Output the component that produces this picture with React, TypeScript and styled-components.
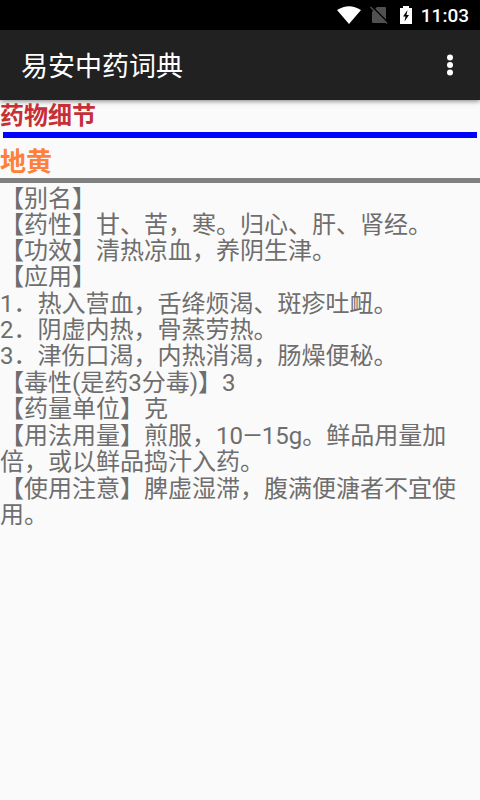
import React from "react";
import styled, { createGlobalStyle } from "styled-components";

const GlobalStyle = createGlobalStyle`
  * { box-sizing: border-box; }
  body {
    margin: 0;
    background: #fafafa;
    font-family: Roboto, "Noto Sans CJK SC", sans-serif;
    text-spacing-trim: space-all;
  }
`;

const Page = styled.div`
  display: flex;
  flex-direction: column;
  min-height: 100vh;
`;

const StatusBar = styled.div`
  display: flex;
  align-items: center;
  justify-content: flex-end;
  height: 30px;
  padding-right: 11px;
  background: #000;
  color: #fff;
`;

const StatusIcons = styled.div`
  display: flex;
  align-items: center;
  gap: 9px;
  margin-right: 6px;

  svg { display: block; }
`;

const Clock = styled.time`
  padding-top: 2px;
  font-size: 19px;
  font-weight: 500;
  line-height: 28px;
`;

const AppBar = styled.header`
  display: flex;
  align-items: center;
  justify-content: space-between;
  height: 70px;
  padding: 0 12px 0 21px;
  background: #212121;
  color: #fff;
  box-shadow: 0 1px 5px rgba(0, 0, 0, 0.5);
`;

const AppTitle = styled.h1`
  margin: 0;
  padding-top: 4px;
  font-size: 27px;
  font-weight: 400;
  line-height: 40px;
`;

const MenuButton = styled.button`
  display: flex;
  align-items: center;
  justify-content: center;
  width: 36px;
  height: 48px;
  padding: 0;
  border: 0;
  background: none;
  color: inherit;
`;

const SectionTitle = styled.h2`
  margin: 0;
  color: #c62f35;
  font-size: 24px;
  font-weight: 700;
  line-height: 32px;
`;

const BlueRule = styled.hr`
  width: calc(100% - 6px);
  height: 6px;
  margin: 0 3px;
  border: 0;
  background: #0000ff;
`;

const HerbName = styled.h3`
  margin: 0;
  padding-top: 8px;
  color: #ff7f3b;
  font-size: 26px;
  font-weight: 700;
  line-height: 32px;
`;

const GrayRule = styled.hr`
  width: 100%;
  height: 5px;
  margin: 0;
  border: 0;
  background: #808080;
`;

const Details = styled.div`
  display: flex;
  flex-direction: column;
  gap: 1px;
  padding-top: 3px;
  color: #6e6e6e;
  font-size: 24px;
  line-height: 26px;
`;

const Line = styled.p`
  margin: 0;
`;

const groups: string[][] = [
  [
    "【别名】",
    "【药性】甘、苦，寒。归心、肝、肾经。",
    "【功效】清热凉血，养阴生津。",
    "【应用】",
  ],
  [
    "1．热入营血，舌绛烦渴、斑疹吐衄。",
    "2．阴虚内热，骨蒸劳热。",
    "3．津伤口渴，内热消渴，肠燥便秘。",
  ],
  ["【毒性(是药3分毒)】3", "【药量单位】克"],
  ["【用法用量】煎服，10—15g。鲜品用量加倍，或以鲜品捣汁入药。"],
  ["【使用注意】脾虚湿滞，腹满便溏者不宜使用。"],
];

const WifiIcon = () => (
  <svg width="24" height="18" viewBox="0 0 24 18" aria-hidden="true">
    <path d="M0 4Q12-3.600 24 4L12 18Z" fill="#fff" />
  </svg>
);

const NoSimIcon = () => (
  <svg width="18" height="18" viewBox="0 0 18 18" aria-hidden="true">
    <path d="M7 1h8q1 0 1 1v14q0 1-1 1H3q-1 0-1-1V6Z" fill="#505050" />
    <path d="M2 0.500 18 16.500" stroke="#000" strokeWidth="1.500" />
    <path d="M0.500 1 17 17.500" stroke="#505050" strokeWidth="1.500" />
  </svg>
);

const BatteryIcon = () => (
  <svg width="18" height="18" viewBox="0 0 18 18" aria-hidden="true">
    <path d="M6 0h6v2h3v16H3V2h3Z" fill="#fff" />
    <path d="M10.500 4 6 10.500h2.500L7.500 15.500 12 9H9.500Z" fill="#000" />
  </svg>
);

export default function App() {
  return (
    <Page>
      <GlobalStyle />
      <StatusBar>
        <StatusIcons>
          <WifiIcon />
          <NoSimIcon />
          <BatteryIcon />
        </StatusIcons>
        <Clock>11:03</Clock>
      </StatusBar>
      <AppBar>
        <AppTitle>易安中药词典</AppTitle>
        <MenuButton type="button" aria-label="更多选项">
          <svg width="6" height="22" viewBox="0 0 6 22" aria-hidden="true">
            <circle cx="3" cy="3.500" r="3" fill="currentColor" />
            <circle cx="3" cy="11" r="3" fill="currentColor" />
            <circle cx="3" cy="18.500" r="3" fill="currentColor" />
          </svg>
        </MenuButton>
      </AppBar>
      <main>
        <SectionTitle>药物细节</SectionTitle>
        <BlueRule />
        <HerbName>地黄</HerbName>
        <GrayRule />
        <Details>
          {groups.map((lines) => (
            <section key={lines[0]}>
              {lines.map((line) => (
                <Line key={line}>{line}</Line>
              ))}
            </section>
          ))}
        </Details>
      </main>
    </Page>
  );
}
